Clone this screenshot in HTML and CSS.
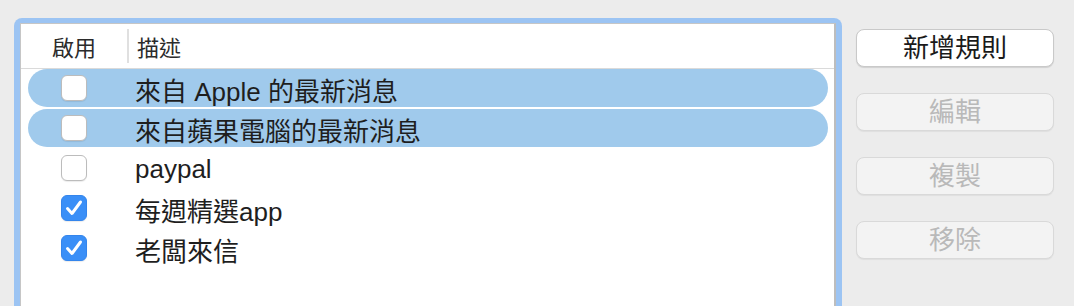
FILE: index.html
```html
<!DOCTYPE html>
<html lang="zh-Hant">
<head>
<meta charset="utf-8">
<title>規則</title>
<link rel="stylesheet" href="styles.css">
</head>
<body>
<div class="page">
  <div class="frame">
    <div class="table">
      <div class="header">
        <div class="hcell hcell-enable">啟用</div>
        <div class="hsep"></div>
        <div class="hcell hcell-desc">描述</div>
      </div>
      <div class="rows">
        <div class="row selected">
          <div class="cell-check"><span class="checkbox"></span></div>
          <div class="cell-text">來自 Apple 的最新消息</div>
        </div>
        <div class="row selected">
          <div class="cell-check"><span class="checkbox"></span></div>
          <div class="cell-text">來自蘋果電腦的最新消息</div>
        </div>
        <div class="row">
          <div class="cell-check"><span class="checkbox"></span></div>
          <div class="cell-text">paypal</div>
        </div>
        <div class="row">
          <div class="cell-check"><span class="checkbox checked"><svg viewBox="0 0 26 26" width="26" height="26"><path d="M6.5 13.5 L11 18.5 L19.5 7" fill="none" stroke="#fff" stroke-width="3" stroke-linecap="round" stroke-linejoin="round"/></svg></span></div>
          <div class="cell-text">每週精選app</div>
        </div>
        <div class="row">
          <div class="cell-check"><span class="checkbox checked"><svg viewBox="0 0 26 26" width="26" height="26"><path d="M6.5 13.5 L11 18.5 L19.5 7" fill="none" stroke="#fff" stroke-width="3" stroke-linecap="round" stroke-linejoin="round"/></svg></span></div>
          <div class="cell-text">老闆來信</div>
        </div>
      </div>
    </div>
  </div>
  <div class="buttons">
    <button class="btn">新增規則</button>
    <button class="btn disabled">編輯</button>
    <button class="btn disabled">複製</button>
    <button class="btn disabled">移除</button>
  </div>
</div>
</body>
</html>
```

FILE: styles.css
```css
html, body {
  margin: 0;
  padding: 0;
  background: #ececec;
  overflow: hidden;
  height: 306px;
  font-family: "Liberation Sans", "Noto Sans CJK TC", sans-serif;
}

.page {
  display: flex;
  align-items: flex-start;
  padding: 18px 0 0 14px;
  height: 306px;
  box-sizing: border-box;
  overflow: hidden;
}

.frame {
  width: 828px;
  height: 288px;
  box-sizing: border-box;
  border: 6px solid #9cc4f3;
  border-top-width: 5px;
  border-bottom-width: 0;
  border-radius: 8px 8px 0 0;
  background: #9cc4f3;
}

.table {
  height: 100%;
  box-sizing: border-box;
  background: #fff;
  border-left: 1px solid #c6c6c6;
  border-top: 1px solid #c6c6c6;
  border-right: 2px solid #bdbdbd;
}

.header {
  display: flex;
  align-items: center;
  height: 44px;
  border-bottom: 1px solid #dadada;
  font-size: 22px;
  color: #2b2b2b;
}

.hcell-enable {
  width: 106px;
  text-align: center;
}

.hsep {
  width: 2px;
  height: 34px;
  background: #e0e0e0;
}

.hcell-desc {
  padding-left: 8px;
}

.rows {
  display: flex;
  flex-direction: column;
  gap: 2px;
  padding: 0 6px 0 7px;
}

.row {
  display: flex;
  align-items: center;
  height: 38px;
  border-radius: 19px;
  font-size: 26px;
  color: #1e1e1e;
}

.row.selected {
  background: #a0caec;
}

.cell-check {
  width: 92px;
  display: flex;
  justify-content: center;
}

.cell-text {
  padding-left: 15px;
  padding-top: 3px;
  white-space: nowrap;
}

.checkbox {
  display: block;
  width: 26px;
  height: 26px;
  box-sizing: border-box;
  border: 1px solid #bcbcbc;
  border-radius: 6px;
  background: #fff;
  box-shadow: 0 1px 1px rgba(0, 0, 0, 0.08);
  position: relative;
}

.checkbox.checked {
  background: #3a8ff7;
  border-color: #3485ec;
}

.checkbox svg {
  position: absolute;
  left: -1px;
  top: -1px;
}

.buttons {
  display: flex;
  flex-direction: column;
  gap: 26px;
  margin: 11px 0 0 14px;
}

.btn {
  width: 198px;
  height: 38px;
  box-sizing: border-box;
  border: 1px solid #c9c9c9;
  border-radius: 8px;
  background: #fff;
  box-shadow: 0 1px 1px rgba(0, 0, 0, 0.12);
  font-family: "Liberation Sans", "Noto Sans CJK TC", sans-serif;
  font-size: 26px;
  line-height: 1;
  color: #1a1a1a;
  padding: 0;
}

.btn.disabled {
  background: #f3f3f3;
  border-color: #d9d9d9;
  color: #b9b9b9;
  box-shadow: 0 1px 1px rgba(0, 0, 0, 0.06);
}
```
